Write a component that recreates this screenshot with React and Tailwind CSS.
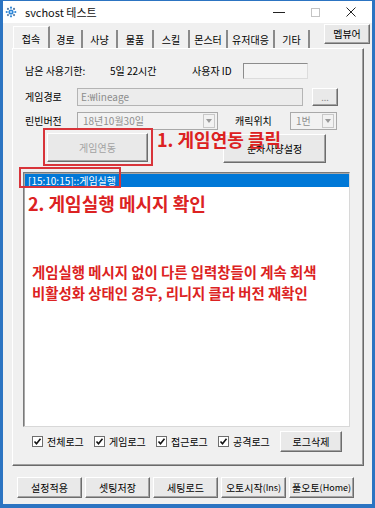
import React from "react";

function GearIcon() {
  const dots = [];
  for (let i = 0; i < 8; i++) {
    const a = (i * Math.PI) / 4;
    dots.push(
      <circle key={i} cx={6 + Math.cos(a) * 4.3} cy={6 + Math.sin(a) * 4.3} r="1.1" fill={i % 2 ? "#5a7fa8" : "#2f86d6"} />
    );
  }
  return (
    <svg width="12" height="12" viewBox="0 0 12 12" className="shrink-0">
      {dots}
      <circle cx="6" cy="6" r="2.6" fill="#2f86d6" />
      <circle cx="6" cy="6" r="1.1" fill="#bfe0ff" />
    </svg>
  );
}

function Btn({ className = "", children }) {
  return (
    <div
      className={
        "flex items-center justify-center bg-[#e9e9e9] border border-t-white border-l-white border-r-[#6d6d6d] border-b-[#6d6d6d] shadow-[inset_-1px_-1px_0_#a3a3a3] whitespace-nowrap " +
        className
      }
    >
      {children}
    </div>
  );
}

function Select({ className = "", text }) {
  return (
    <div className={"flex items-center h-[18px] bg-[#f2f2f2] border border-[#a9a9a9] " + className}>
      <span className="flex-1 pl-[5px] text-[#8f8f8f]">{text}</span>
      <div className="w-[12px] h-[14px] mr-[2px] flex items-center justify-center border border-[#c8c8c8] bg-[#f2f2f2]">
        <svg width="6" height="4" viewBox="0 0 6 4">
          <path d="M0 0 L6 0 L3 4 Z" fill="#9a9a9a" />
        </svg>
      </div>
    </div>
  );
}

function Check({ label }) {
  return (
    <div className="flex items-center w-[62px]">
      <div className="w-[11px] h-[11px] bg-white border border-[#6e6e6e] flex items-center justify-center">
        <svg width="9" height="9" viewBox="0 0 9 9">
          <path d="M1.5 4.5 L3.5 6.8 L7.5 1.8" stroke="#111" strokeWidth="1.6" fill="none" />
        </svg>
      </div>
      <span className="ml-[4px] text-[10px]">{label}</span>
    </div>
  );
}

const tabs = [
  ["경로", 33],
  ["사냥", 35],
  ["물품", 36],
  ["스킬", 36],
  ["몬스터", 38],
  ["유저대응", 47],
  ["기타", 35],
];

export default function App() {
  return (
    <div className="w-[375px] h-[508px] bg-[#2c74c2] pl-[3px] pr-[3px] pb-[4px] pt-px overflow-hidden font-['Noto_Sans_CJK_KR','Noto_Sans',sans-serif] text-[10px] leading-none text-black">
      <div className="w-full h-full bg-[#f0f0f0] flex flex-col">
        {/* Title bar */}
        <div className="h-[22px] bg-white flex items-center shrink-0">
          <div className="ml-[2px]">
            <GearIcon />
          </div>
          <span className="ml-[8px] text-[11px] text-[#111]">svchost 테스트</span>
          <div className="flex-1" />
          <div className="w-[36px] h-full flex items-center justify-center">
            <div className="w-[12px] h-px bg-[#222]" />
          </div>
          <div className="w-[36px] h-full flex items-center justify-center">
            <div className="w-[9px] h-[9px] border border-[#c4c4c4]" />
          </div>
          <div className="w-[36px] h-full flex items-center justify-center mr-[3px]">
            <svg width="10" height="10" viewBox="0 0 10 10">
              <path d="M0.5 0.5 L9.5 9.5 M9.5 0.5 L0.5 9.5" stroke="#222" strokeWidth="1" />
            </svg>
          </div>
        </div>

        {/* Tabs row */}
        <div className="h-[25px] flex shrink-0 pl-[10px]">
          <div className="flex items-end h-full">
            <div className="w-[37px] h-[22px] flex items-center justify-center pt-[2px] bg-[#f0f0f0] border-l border-t border-white border-r-2 border-r-[#8a8a8a]">
              접속
            </div>
            {tabs.map(([t, w]) => (
              <div
                key={t}
                style={{ width: w }}
                className="h-[18px] flex items-center justify-center pt-[2px] border-r-2 border-[#8a8a8a]"
              >
                {t}
              </div>
            ))}
          </div>
          <div className="flex-1" />
          <Btn className="w-[46px] h-[20px] mt-px mr-[2px]">멥뷰어</Btn>
        </div>

        {/* Tab panel */}
        <div className="relative ml-[9px] w-[352px] h-[418px] shrink-0 border border-t-white border-l-white border-r-[#6a6a6a] border-b-[#6a6a6a] shadow-[inset_-1px_-1px_0_#a0a0a0] flex flex-col">
          {/* Row 1 */}
          <div className="mt-[14px] h-[16px] pl-[12px] flex items-center">
            <span className="w-[85px]">남은 사용기한:</span>
            <span className="w-[82px]">5일 22시간</span>
            <span className="w-[51px]">사용자 ID</span>
            <div className="w-[65px] h-[16px] bg-[#f4f4f4] border border-t-[#8c8c8c] border-l-[#8c8c8c] border-r-[#dcdcdc] border-b-[#dcdcdc]" />
          </div>
          {/* Row 2 */}
          <div className="mt-[9px] h-[18px] pl-[12px] flex items-center">
            <span className="w-[52px]">게임경로</span>
            <div className="w-[226px] h-[18px] bg-[#ececec] border border-[#b4b4b4] flex items-center pl-[3px] text-[#8c8c8c]">
              E:₩lineage
            </div>
            <Btn className="ml-[9px] w-[26px] h-[18px] text-[#8a8a8a] text-[9px]">...</Btn>
          </div>
          {/* Row 3 */}
          <div className="mt-[6px] h-[18px] pl-[12px] flex items-center">
            <span className="w-[52px]">린빈버전</span>
            <Select className="w-[141px]" text="18년10월30일" />
            <span className="ml-[17px] w-[55px]">캐릭위치</span>
            <Select className="w-[47px]" text="1번" />
          </div>
          {/* Row 4 */}
          <div className="mt-[3px] h-[30px] flex items-start">
            <Btn className="ml-[34px] w-[101px] h-[29px] text-[#a3a3a3]">게임연동</Btn>
            <Btn className="ml-[75px] mt-px w-[103px] h-[29px]">순차사냥설정</Btn>
          </div>
          {/* Listbox */}
          <div className="mt-[9px] ml-[10px] w-[327px] h-[255px] bg-white border border-t-[#7a7a7a] border-l-[#7a7a7a] border-r-[#d8d8d8] border-b-[#d8d8d8] shadow-[inset_1px_1px_0_#a8a8a8] flex flex-col">
            <div className="h-[13px] mt-px ml-px bg-[#0078d7] text-white flex items-center pl-[3px] text-[10px]">
              [15:10:15]::게임실행
            </div>
            <div className="mt-[5px] pl-[4px] text-[18px] leading-[22px] font-bold text-[#dc2222]">
              2. 게임실행 메시지 확인
            </div>
            <div className="mt-[47px] pl-[8px] text-[14.4px] leading-[21px] font-bold text-[#dc2222]">
              <div>게임실행 메시지 없이 다른 입력창들이 계속 회색</div>
              <div>비활성화 상태인 경우, 리니지 클라 버전 재확인</div>
            </div>
          </div>
          {/* Checkbox row */}
          <div className="mt-[4px] h-[21px] flex items-center pl-[19px]">
            <Check label="전체로그" />
            <Check label="게임로그" />
            <Check label="접근로그" />
            <Check label="공격로그" />
            <Btn className="w-[62px] h-[21px]">로그삭제</Btn>
          </div>

          {/* Annotations */}
          <div className="absolute left-[30px] top-[79px] w-[110px] h-[38px] border-2 border-[#d8343a]" />
          <div className="absolute left-[6px] top-[118px] w-[102px] h-[21px] border-2 border-[#d8343a]" />
          <div className="absolute left-[144px] top-[79px] text-[18px] leading-[22px] font-bold text-[#dc2222] whitespace-nowrap">
            1. 게임연동 클릭
          </div>
        </div>

        {/* Bottom buttons */}
        <div className="mt-[11px] ml-[14px] flex gap-[3px]">
          <Btn className="w-[65px] h-[21px] border-[#505050] border-t-[#505050] border-l-[#505050]">설정적용</Btn>
          <Btn className="w-[65px] h-[21px]">셋팅저장</Btn>
          <Btn className="w-[65px] h-[21px]">세팅로드</Btn>
          <Btn className="w-[65px] h-[21px]">
            오토시작<span className="text-[9px]">(Ins)</span>
          </Btn>
          <Btn className="w-[65px] h-[21px]">
            풀오토<span className="text-[9px]">(Home)</span>
          </Btn>
        </div>
      </div>
    </div>
  );
}
